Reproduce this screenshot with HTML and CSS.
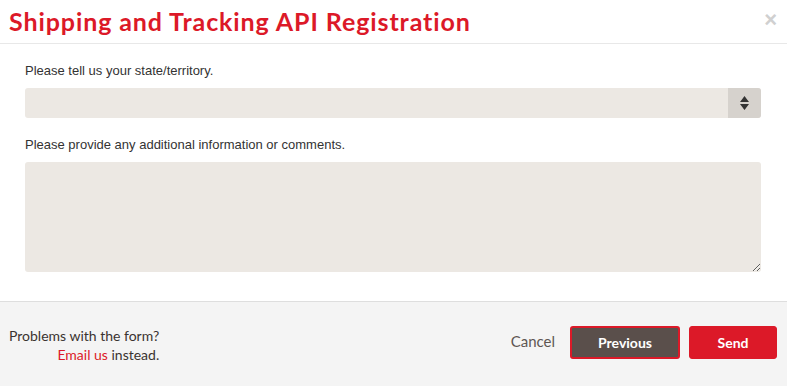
FILE: index.html
```html
<!DOCTYPE html>
<html lang="en">
<head>
    <meta charset="UTF-8">
    <title>Shipping and Tracking API Registration</title>
    <link rel="stylesheet" href="styles.css">
</head>
<body>
    <div class="modal">
        <div class="modal-header">
            <h1>Shipping and Tracking API Registration</h1>
            <span class="close">&times;</span>
        </div>
        <form class="modal-body">
            <label for="state">Please tell us your state/territory.</label>
            <div class="select-wrap">
                <select id="state" name="state"></select>
                <span class="select-arrow">
                    <svg width="9" height="14" viewBox="0 0 9 14"><path d="M4.5 0L9 6H0z M4.5 14L0 8H9z" fill="#333"/></svg>
                </span>
            </div>

            <label for="comments">Please provide any additional information or comments.</label>
            <textarea id="comments" name="comments"></textarea>
        </form>
        <div class="modal-footer">
            <div class="help">
                <div>Problems with the form?</div>
                <div class="help-line"><a href="#">Email us</a> instead.</div>
            </div>
            <div class="actions">
                <a href="#" class="cancel">Cancel</a>
                <button type="button" class="btn btn-prev">Previous</button>
                <button type="button" class="btn btn-send">Send</button>
            </div>
        </div>
    </div>
</body>
</html>
```

FILE: styles.css
```css
html, body {
    margin: 0;
    padding: 0;
    height: 100%;
}
body {
    background-color: #fff;
    font-family: "Liberation Sans", Arial, sans-serif;
}
.modal {
    display: flex;
    flex-direction: column;
    height: 100%;
}
.modal-header {
    display: flex;
    justify-content: space-between;
    align-items: center;
    height: 43px;
    padding: 0 10px 0 9px;
    border-bottom: 1px solid #e8e8e8;
}
h1 {
    margin: 0 0 2px;
    font-family: Lato, sans-serif;
    font-size: 25px;
    font-weight: 700;
    color: #dc1928;
    letter-spacing: 0.9px;
}
.close {
    font-size: 22px;
    font-weight: 700;
    color: #d0d0d0;
    line-height: 1;
    margin-bottom: 4px;
}
.modal-body {
    flex-grow: 1;
    padding: 19px 26px 0 25px;
}
label {
    display: block;
    font-size: 13px;
    color: #333;
    margin-bottom: 10px;
}
.select-wrap {
    display: flex;
    height: 30px;
    margin-bottom: 19px;
    background-color: #ece8e3;
    border-radius: 3px;
    overflow: hidden;
}
select {
    flex-grow: 1;
    border: none;
    background: transparent;
    -webkit-appearance: none;
    appearance: none;
}
.select-arrow {
    width: 33px;
    display: flex;
    justify-content: center;
    align-items: center;
    background-color: #d6d2cd;
}
textarea {
    display: block;
    width: 100%;
    height: 110px;
    box-sizing: border-box;
    border: none;
    border-radius: 3px;
    background-color: #ece8e3;
    resize: vertical;
}
.modal-footer {
    display: flex;
    justify-content: space-between;
    align-items: center;
    height: 84px;
    padding: 0 10px 0 9px;
    background-color: #f4f4f4;
    border-top: 1px solid #dedede;
    font-family: Lato, sans-serif;
    font-size: 14px;
    color: #3a3330;
}
.help {
    line-height: 19px;
    padding-top: 2px;
}
.help-line {
    text-align: right;
}
.help a {
    color: #dc1928;
    text-decoration: none;
}
.actions {
    display: flex;
    align-items: center;
    margin-top: -4px;
}
.cancel {
    color: #5e5652;
    text-decoration: none;
    font-size: 15px;
    margin-right: 15px;
    margin-top: -2px;
}
.btn {
    height: 33px;
    border-radius: 3px;
    font-family: Lato, sans-serif;
    font-size: 14px;
    font-weight: 700;
    color: #fff;
    cursor: pointer;
}
.btn-prev {
    width: 110px;
    background-color: #5a4f4b;
    border: 2px solid #dc1928;
    margin-right: 9px;
}
.btn-send {
    width: 88px;
    background-color: #dc1928;
    border: 1px solid #dc1928;
}
```
